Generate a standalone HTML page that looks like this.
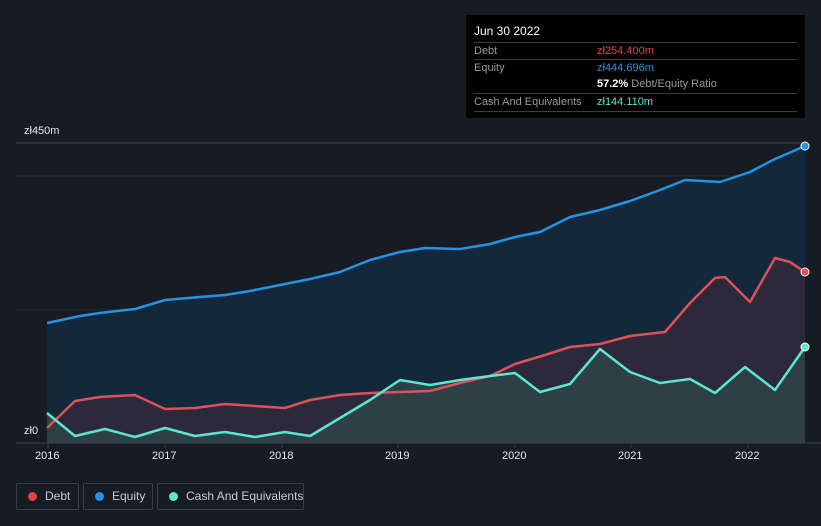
<!DOCTYPE html>
<html><head><meta charset="utf-8"><style>
html,body{margin:0;width:821px;height:526px;overflow:hidden}
body{background:#161b24;font-family:"Liberation Sans",sans-serif;position:relative}
.tt{position:absolute;left:466px;top:15px;width:339px;height:103px;background:#000;color:#ddd;font-size:11px}
.tt .r{position:absolute;left:8px;right:8px;border-top:1px solid #3a3d42;height:17px;line-height:17px}
.lg{position:absolute;top:483px;height:27px;border:1px solid #3a404a;border-radius:2px;color:#c8ccd2;font-size:12px;line-height:25px;box-sizing:border-box;white-space:nowrap}
.lg i{position:absolute;left:11px;top:8px;width:9px;height:9px;border-radius:50%}
.ax{position:absolute;color:#e6e8ea;font-size:11px}
</style></head><body>
<svg width="821" height="526" style="position:absolute;left:0;top:0">
<line x1="16" y1="143" x2="805" y2="143" stroke="#3a3f47"/>
<line x1="16" y1="176" x2="805" y2="176" stroke="#252b34"/>
<line x1="16" y1="310" x2="805" y2="310" stroke="#252b34"/>
<path d="M47,323 L80,316 100,313 135,309 165,300 200,297 225,295 250,291 285,284 310,279 340,272 370,260 400,252 425,248 460,249 490,244 515,237 540,232 570,217 600,210 630,201 660,190 685,180 720,182 750,172 775,159 805,146 L805,443 47,443Z" fill="#14283b"/>
<path d="M47,428 L75,401 100,397 135,395 165,409 195,408 225,404 255,406 285,408 310,400 340,395 370,393 400,392 430,391 460,383 490,376 515,364 545,355 570,347 600,344 630,336 665,332 690,303 715,278 725,277 750,302 775,258 790,262 805,272 L805,443 47,443Z" fill="#2c2a3a"/>
<path d="M47,413 L75,436 105,429 135,437 165,428 195,436 225,432 255,437 285,432 310,436 340,418 370,400 400,380 430,385 460,380 490,376 515,373 540,392 570,384 600,349 630,372 660,383 690,379 715,393 745,367 775,390 805,347 L805,443 47,443Z" fill="#2f4248" opacity="0.9"/>
<g fill="none" stroke-width="2.5" stroke-linejoin="round">
<polyline stroke="#2394e4" points="47,323 80,316 100,313 135,309 165,300 200,297 225,295 250,291 285,284 310,279 340,272 370,260 400,252 425,248 460,249 490,244 515,237 540,232 570,217 600,210 630,201 660,190 685,180 720,182 750,172 775,159 805,146"/>
<polyline stroke="#e0505a" points="47,428 75,401 100,397 135,395 165,409 195,408 225,404 255,406 285,408 310,400 340,395 370,393 400,392 430,391 460,383 490,376 515,364 545,355 570,347 600,344 630,336 665,332 690,303 715,278 725,277 750,302 775,258 790,262 805,272"/>
<polyline stroke="#5ee4d0" points="47,413 75,436 105,429 135,437 165,428 195,436 225,432 255,437 285,432 310,436 340,418 370,400 400,380 430,385 460,380 490,376 515,373 540,392 570,384 600,349 630,372 660,383 690,379 715,393 745,367 775,390 805,347"/>
</g>
<line x1="16" y1="443" x2="821" y2="443" stroke="#3a3f47"/>
<g stroke="#3a3f47"><line x1="48" y1="443" x2="48" y2="448"/><line x1="165" y1="443" x2="165" y2="448"/><line x1="282" y1="443" x2="282" y2="448"/><line x1="398" y1="443" x2="398" y2="448"/><line x1="515" y1="443" x2="515" y2="448"/><line x1="631" y1="443" x2="631" y2="448"/><line x1="748" y1="443" x2="748" y2="448"/></g>
<circle cx="805" cy="146" r="4" fill="#2394e4" stroke="#fff" stroke-width="1"/>
<circle cx="805" cy="272" r="4" fill="#e0505a" stroke="#fff" stroke-width="1"/>
<circle cx="805" cy="347" r="4" fill="#5ee4d0" stroke="#fff" stroke-width="1"/>
</svg>
<div class="ax" style="left:24px;top:125px">zł450m</div>
<div class="ax" style="left:24px;top:425px">zł0</div>
<div class="ax" style="left:35px;top:450px">2016</div>
<div class="ax" style="left:152px;top:450px">2017</div>
<div class="ax" style="left:269px;top:450px">2018</div>
<div class="ax" style="left:385px;top:450px">2019</div>
<div class="ax" style="left:502px;top:450px">2020</div>
<div class="ax" style="left:618px;top:450px">2021</div>
<div class="ax" style="left:735px;top:450px">2022</div>
<div class="tt">
<div style="position:absolute;left:8px;top:9px;color:#fff;font-size:12px">Jun 30 2022</div>
<div class="r" style="top:27px;color:#999">Debt<span style="position:absolute;left:123px;color:#e8424a">zł254.400m</span></div>
<div class="r" style="top:44px;color:#999">Equity<span style="position:absolute;left:123px;color:#2394e4">zł444.696m</span></div>
<div style="position:absolute;left:131px;top:61px;line-height:17px;color:#999"><b style="color:#fff">57.2%</b> Debt/Equity Ratio</div>
<div class="r" style="top:78px;color:#999;border-bottom:1px solid #3a3d42">Cash And Equivalents<span style="position:absolute;left:123px;color:#5ee4d0">zł144.110m</span></div>
</div>
<div class="lg" style="left:16px;width:63px"><i style="background:#e8424a"></i><span style="position:absolute;left:28px">Debt</span></div>
<div class="lg" style="left:83px;width:70px"><i style="background:#2394e4"></i><span style="position:absolute;left:28px">Equity</span></div>
<div class="lg" style="left:157px;width:147px"><i style="background:#5ee4d0"></i><span style="position:absolute;left:28px">Cash And Equivalents</span></div>
</body></html>
